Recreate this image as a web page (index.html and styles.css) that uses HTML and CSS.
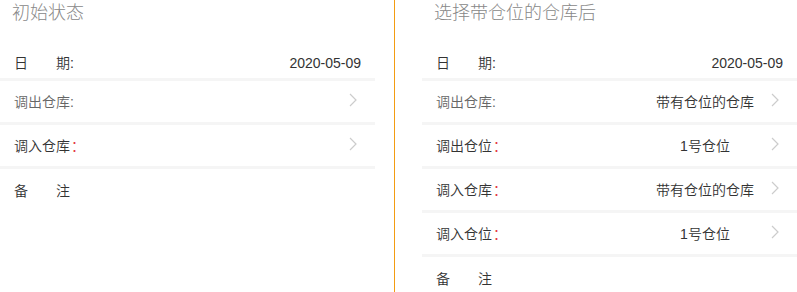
FILE: index.html
```html
<!DOCTYPE html>
<html lang="zh-CN">
<head>
<meta charset="utf-8">
<title>仓位选择</title>
<link rel="stylesheet" href="styles.css">
</head>
<body>
<div class="page">
  <section class="panel">
    <h2 class="title">初始状态</h2>
    <div class="row row-date"><span class="label">日　　期:</span><span class="date">2020-05-09</span></div>
    <div class="row row-link"><span class="label muted">调出仓库:</span><svg class="chev" viewBox="0 0 8 14"><polyline points="1,1 7,7 1,13"/></svg></div>
    <div class="row row-link"><span class="label">调入仓库<span class="req">：</span></span><svg class="chev" viewBox="0 0 8 14"><polyline points="1,1 7,7 1,13"/></svg></div>
    <div class="row row-remark"><span class="label">备　　注</span></div>
  </section>
  <div class="divider"></div>
  <section class="panel">
    <h2 class="title">选择带仓位的仓库后</h2>
    <div class="row row-date"><span class="label">日　　期:</span><span class="date">2020-05-09</span></div>
    <div class="row row-link"><span class="label muted">调出仓库:</span><span class="value">带有仓位的仓库</span><svg class="chev" viewBox="0 0 8 14"><polyline points="1,1 7,7 1,13"/></svg></div>
    <div class="row row-link"><span class="label">调出仓位<span class="req">：</span></span><span class="value">1号仓位</span><svg class="chev" viewBox="0 0 8 14"><polyline points="1,1 7,7 1,13"/></svg></div>
    <div class="row row-link"><span class="label">调入仓库<span class="req">：</span></span><span class="value">带有仓位的仓库</span><svg class="chev" viewBox="0 0 8 14"><polyline points="1,1 7,7 1,13"/></svg></div>
    <div class="row row-link"><span class="label">调入仓位<span class="req">：</span></span><span class="value">1号仓位</span><svg class="chev" viewBox="0 0 8 14"><polyline points="1,1 7,7 1,13"/></svg></div>
    <div class="row row-remark"><span class="label">备　　注</span></div>
  </section>
</div>
</body>
</html>
```
FILE: styles.css
```css
html, body {
  margin: 0;
  padding: 0;
  background: #ffffff;
}

body {
  font-family: "Liberation Sans", "Noto Sans CJK SC", sans-serif;
  font-size: 14px;
  color: #333333;
}

.page {
  display: flex;
  height: 292px;
  overflow: hidden;
}

.panel {
  flex: none;
  width: 375px;
}

.divider {
  flex: none;
  width: 1px;
  background: #f39c12;
  margin: 0 27px 0 19px;
}

.title {
  margin: 0;
  padding: 1px 0 0 12px;
  height: 40px;
  font-size: 18px;
  font-weight: 300;
  line-height: 24px;
  color: #888888;
}

.row {
  display: flex;
  align-items: center;
  padding: 0 18px 0 14px;
  height: 41px;
  line-height: 20px;
  border-bottom: 3px solid #f5f5f5;
  font-weight: 350;
}

.row-date {
  height: 31px;
  padding-top: 6px;
  padding-right: 14px;
}

.row-remark {
  border-bottom: none;
  height: 40px;
  padding-top: 2px;
}

.label {
  color: #333333;
}

.label.muted {
  color: #666666;
}

.req {
  color: #e4393c;
  margin-left: 1px;
}

.date {
  margin-left: auto;
  color: #333333;
}

.value {
  margin-left: auto;
  margin-right: 6px;
  width: 120px;
  text-align: center;
  color: #333333;
}

.chev {
  flex: none;
  width: 8px;
  height: 14px;
  margin-left: auto;
  margin-bottom: 3px;
}

.value + .chev {
  margin-left: 0;
}

.chev polyline {
  fill: none;
  stroke: #cccccc;
  stroke-width: 1.2;
}
```
